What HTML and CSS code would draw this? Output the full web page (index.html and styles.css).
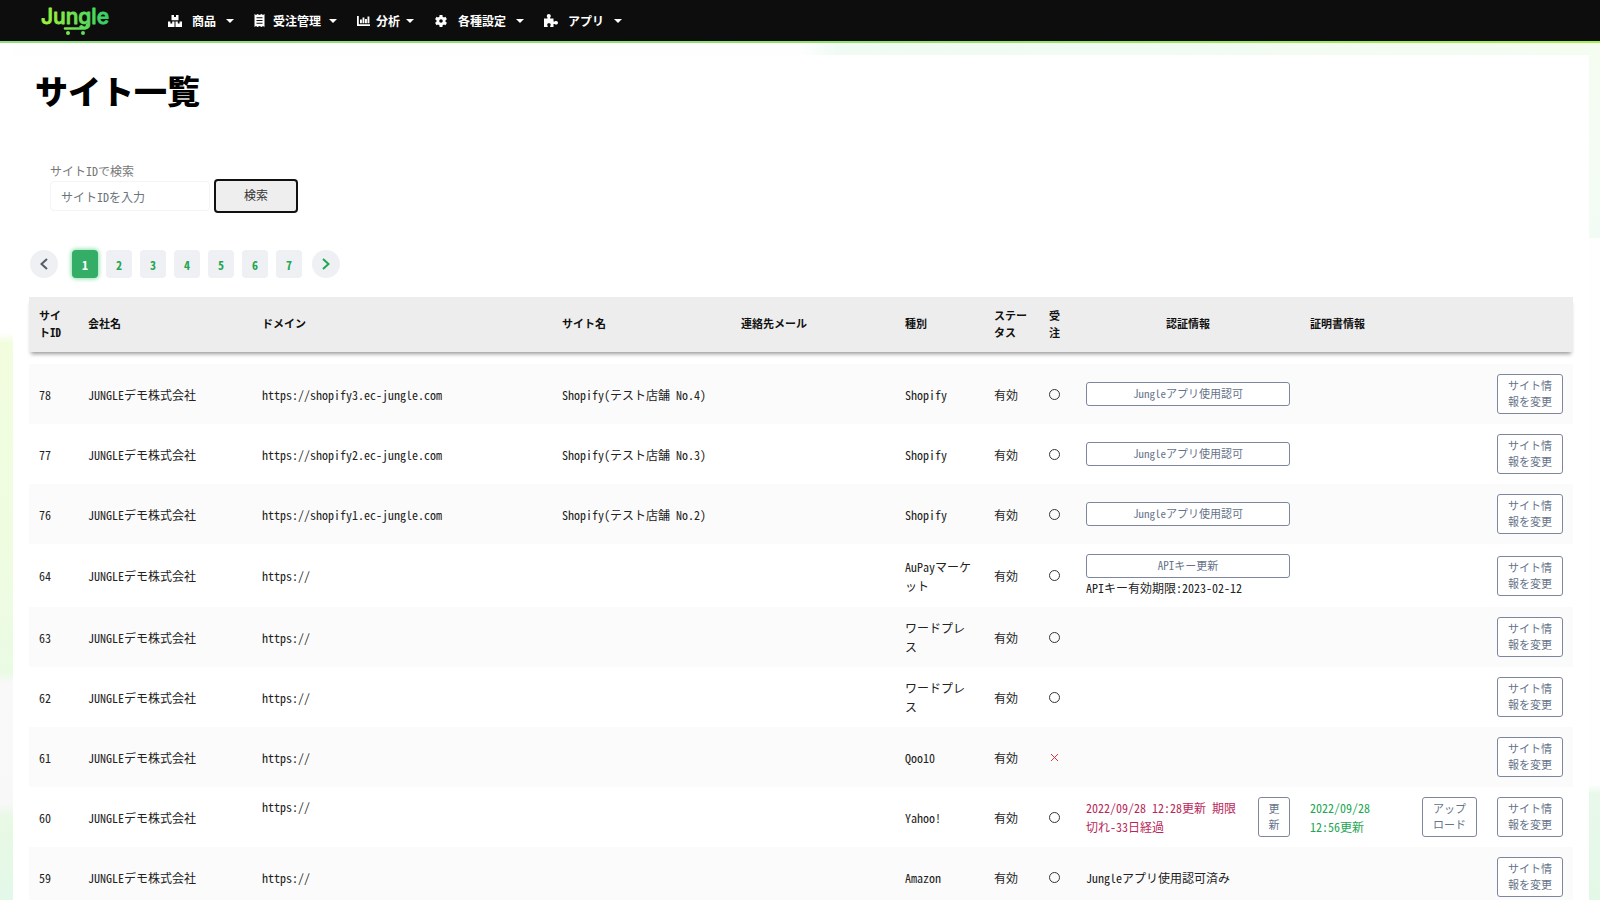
FILE: index.html
```
<!DOCTYPE html>
<html lang="ja">
<head>
<meta charset="utf-8">
<title>サイト一覧 | Jungle</title>
<link rel="stylesheet" href="styles.css">
</head>
<body>
<header class="navbar">
  <a class="logo" href="#" aria-label="Jungle">
    <svg width="72" height="38" viewBox="0 0 72 38">
      <defs>
        <linearGradient id="brand" gradientUnits="userSpaceOnUse" x1="2" y1="0" x2="68" y2="0">
          <stop offset="0" stop-color="#a4f23a"/><stop offset="1" stop-color="#36cf6c"/>
        </linearGradient>
      </defs>
      <text class="logo-text" x="1" y="22" fill="url(#brand)" stroke="url(#brand)">Jungle</text>
      <path d="M25 26.500H44Q47 26.500 47 23" fill="none" stroke="url(#brand)" stroke-width="2.600" stroke-linecap="round"/>
      <circle cx="28" cy="31" r="2" fill="url(#brand)"/><circle cx="43" cy="31" r="2" fill="url(#brand)"/>
    </svg>
  </a>
  <nav class="menu">
    <button class="menu-item" type="button">
      <svg class="icon" width="14" height="12" viewBox="0 0 14 12"><path d="M4 0H6V2H8V0H10.500V5.200H3.500V0ZM0 6.500H2.400V8.500H4.200V6.500H6.500V12H0ZM7.500 6.500H9.800V8.500H11.600V6.500H14V12H7.500Z" fill="currentColor"/></svg>
      <span>商品</span></button>
    <button class="menu-item menu-item-close" type="button">
      <svg class="icon" width="11" height="13" viewBox="0 0 11 13"><path fill-rule="evenodd" fill="currentColor" d="M0.500 0L2 1L3.500 0L5.500 1L7.500 0L9 1L10.500 0V13L9 12L7.500 13L5.500 12L3.500 13L2 12L.5 13ZM2.500 3.200V4.200H8.500V3.200ZM2.500 6V7H8.500V6ZM2.500 8.800V9.800H8.500V8.800Z"/></svg>
      <span>受注管理</span></button>
    <button class="menu-item menu-item-tight" type="button">
      <svg class="icon" width="13" height="12" viewBox="0 0 13 12"><path fill="currentColor" d="M0 1H1.800V9.200H13V11H0ZM3 4.500H4.900V8.300H3ZM5.500 2.500H7.400V8.300H5.500ZM8 4H9.900V8.300H8ZM10.500 1.500H12.400V8.300H10.500Z"/></svg>
      <span>分析</span></button>
    <button class="menu-item" type="button">
      <svg class="icon" width="14" height="12" viewBox="-1 0 14 12"><circle cx="6" cy="6" r="3.200" fill="none" stroke="currentColor" stroke-width="2.800"/><path d="M6 0V2.500M6 9.500V12M.8 3L3 4.300M9 7.700L11.200 9M.8 9L3 7.700M9 4.300L11.200 3" stroke="currentColor" stroke-width="3"/></svg>
      <span>各種設定</span></button>
    <button class="menu-item" type="button">
      <svg class="icon" width="14" height="13" viewBox="0 0 14 13"><path fill="currentColor" d="M0 4.500H3.500C3.800 3.500 2.800 3 2.800 2C2.800 .8 3.700 0 4.800 0S6.800 .8 6.800 2C6.800 3 5.800 3.500 6.100 4.500H9.500V7.600C10.500 8 11 7 12.200 7C13.300 7 14 7.900 14 8.800S13.300 10.600 12.200 10.600C11 10.600 10.500 9.600 9.500 10V13H6.200C5.900 12 6.700 11.600 6.700 10.700C6.700 9.800 5.900 9.300 5 9.300S3.200 9.800 3.200 10.700C3.200 11.600 4 12 3.700 13H0Z"/></svg>
      <span>アプリ</span></button>
  </nav>
</header>

<main class="page">
  <section class="panel">
    <h1 class="title">サイト一覧</h1>

    <form class="search">
      <label class="search-label" for="site-id">サイトIDで検索</label>
      <div class="search-row">
        <input class="search-input" id="site-id" type="text" placeholder="サイトIDを入力">
        <button class="search-button" type="button">検索</button>
      </div>
    </form>

    <nav class="pager" aria-label="ページ">
      <a class="pager-arrow pager-prev" href="#" aria-label="前へ"><svg width="8" height="12" viewBox="0 0 8 12"><path d="M7 1L1.500 6L7 11" fill="none" stroke="currentColor" stroke-width="2"/></svg></a>
      <a class="pager-link pager-active" href="#">1</a>
      <a class="pager-link" href="#">2</a>
      <a class="pager-link" href="#">3</a>
      <a class="pager-link" href="#">4</a>
      <a class="pager-link" href="#">5</a>
      <a class="pager-link" href="#">6</a>
      <a class="pager-link" href="#">7</a>
      <a class="pager-arrow pager-next" href="#" aria-label="次へ"><svg width="8" height="12" viewBox="0 0 8 12"><path d="M1 1L6.500 6L1 11" fill="none" stroke="currentColor" stroke-width="2"/></svg></a>
    </nav>

    <table class="sites">
      <colgroup>
        <col class="c-id"><col class="c-company"><col class="c-domain"><col class="c-name"><col class="c-mail"><col class="c-type"><col class="c-status"><col class="c-order"><col class="c-auth"><col class="c-cert"><col class="c-edit">
      </colgroup>
      <thead>
        <tr><th>サイトID</th><th>会社名</th><th>ドメイン</th><th>サイト名</th><th>連絡先メール</th><th>種別</th><th>ステータス</th><th>受注</th><th class="center">認証情報</th><th>証明書情報</th><th></th></tr>
      </thead>
      <tbody>
        <tr><td>78</td><td>JUNGLEデモ株式会社</td><td>https://shopify3.ec-jungle.com</td><td>Shopify(テスト店舗 No.4)</td><td></td><td>Shopify</td><td>有効</td><td><span class="mark"></span></td><td><button class="btn btn-wide" type="button">Jungleアプリ使用認可</button></td><td></td><td><button class="btn btn-edit" type="button">サイト情報を変更</button></td></tr>
        <tr><td>77</td><td>JUNGLEデモ株式会社</td><td>https://shopify2.ec-jungle.com</td><td>Shopify(テスト店舗 No.3)</td><td></td><td>Shopify</td><td>有効</td><td><span class="mark"></span></td><td><button class="btn btn-wide" type="button">Jungleアプリ使用認可</button></td><td></td><td><button class="btn btn-edit" type="button">サイト情報を変更</button></td></tr>
        <tr><td>76</td><td>JUNGLEデモ株式会社</td><td>https://shopify1.ec-jungle.com</td><td>Shopify(テスト店舗 No.2)</td><td></td><td>Shopify</td><td>有効</td><td><span class="mark"></span></td><td><button class="btn btn-wide" type="button">Jungleアプリ使用認可</button></td><td></td><td><button class="btn btn-edit" type="button">サイト情報を変更</button></td></tr>
        <tr><td>64</td><td>JUNGLEデモ株式会社</td><td>https://</td><td></td><td></td><td>AuPayマーケット</td><td>有効</td><td><span class="mark"></span></td><td><button class="btn btn-wide" type="button">APIキー更新</button><div>APIキー有効期限:2023-02-12</div></td><td></td><td><button class="btn btn-edit" type="button">サイト情報を変更</button></td></tr>
        <tr><td>63</td><td>JUNGLEデモ株式会社</td><td>https://</td><td></td><td></td><td>ワードプレス</td><td>有効</td><td><span class="mark"></span></td><td></td><td></td><td><button class="btn btn-edit" type="button">サイト情報を変更</button></td></tr>
        <tr><td>62</td><td>JUNGLEデモ株式会社</td><td>https://</td><td></td><td></td><td>ワードプレス</td><td>有効</td><td><span class="mark"></span></td><td></td><td></td><td><button class="btn btn-edit" type="button">サイト情報を変更</button></td></tr>
        <tr><td>61</td><td>JUNGLEデモ株式会社</td><td>https://</td><td></td><td></td><td>Qoo10</td><td>有効</td><td><svg class="cross" width="11" height="11" viewBox="0 0 11 11" role="img" aria-label="×"><path d="M2 2L9 9M9 2L2 9" stroke="#e8323c"/></svg></td><td></td><td></td><td><button class="btn btn-edit" type="button">サイト情報を変更</button></td></tr>
        <tr><td>60</td><td>JUNGLEデモ株式会社</td><td class="top">https://</td><td></td><td></td><td>Yahoo!</td><td>有効</td><td><span class="mark"></span></td><td><div class="pair"><span class="expired">2022/09/28 12:28更新 期限切れ-33日経過</span><button class="btn btn-renew" type="button">更新</button></div></td><td><div class="pair"><span class="renewed">2022/09/28 12:56更新</span><button class="btn btn-upload" type="button">アップロード</button></div></td><td><button class="btn btn-edit" type="button">サイト情報を変更</button></td></tr>
        <tr><td>59</td><td>JUNGLEデモ株式会社</td><td>https://</td><td></td><td></td><td>Amazon</td><td>有効</td><td><span class="mark"></span></td><td>Jungleアプリ使用認可済み</td><td></td><td><button class="btn btn-edit" type="button">サイト情報を変更</button></td></tr>
      </tbody>
    </table>
  </section>
</main>
</body>
</html>
```
FILE: styles.css
```
* { box-sizing: border-box; }

body {
  margin: 0;
  height: 100vh;
  display: flex;
  flex-direction: column;
  font-family: "Noto Sans Mono CJK JP", "Noto Sans CJK JP", sans-serif;
  font-size: 12px;
  line-height: 19px;
  color: #222;
  background: #fff;
}

button, input { font-family: inherit; }

/* Navigation bar */
.navbar {
  flex: none;
  display: flex;
  align-items: center;
  height: 43px;
  padding-left: 40px;
  background: #0d0d0d;
  border-bottom: 2px solid;
  border-image: linear-gradient(90deg, #8fdd80, #8fe070 50%, #a6f04c) 1;
}
.logo { display: flex; margin-right: 56px; }
.logo-text {
  font-family: Inter, sans-serif;
  font-size: 21px;
  font-weight: 500;
  stroke-width: 0.8;
  stroke-linejoin: round;
}
.menu { display: flex; gap: 20px; }
.menu-item {
  display: flex;
  align-items: center;
  gap: 10px;
  padding: 0;
  border: 0;
  background: none;
  color: #fff;
  font-size: 12px;
  font-weight: 700;
  line-height: 20px;
}
.menu-item-close { gap: 8px; }
.menu-item-tight { gap: 6px; }
.menu-item::after {
  content: "";
  border: 4px solid transparent;
  border-top-color: #fff;
  border-bottom: 0;
}

/* Page background and panel */
.page {
  flex: 1;
  min-height: 0;
  overflow: auto;
  scrollbar-width: none;
  padding: 12px 11px 0 13px;
  background:
    linear-gradient(90deg, transparent, #f0fbf4 40px, #f5fcf2) right top / 50% 12px no-repeat,
    linear-gradient(#f5fcf2, #f3fcf4) right top / 11px 195px no-repeat,
    linear-gradient(#fff, #e8f8ea 10px, #e4f8e8) right bottom / 11px 116px no-repeat,
    linear-gradient(#fff 290px, #f1fddd 300px, #effce0 500px, #eafbe4 630px, #f8f9f8 640px, #f8f8f8 760px, #e8f9e4 775px, #e3f8e9) left top / 13px 100% no-repeat,
    #fefefe;
}
.panel {
  padding: 14px 16px 0;
  background: #fff;
}
.title {
  margin: 0 6px;
  font-family: "Noto Sans CJK JP", sans-serif;
  font-size: 33px;
  font-weight: 900;
  line-height: 42px;
  color: #000;
}

/* Search */
.search { margin: 51px 21px 0; }
.search-label { display: block; line-height: 17px; color: #777; }
.search-row { display: flex; align-items: center; gap: 4px; }
.search-input {
  width: 160px;
  height: 30px;
  padding: 0 10px;
  border: 1px solid #f4f4f6;
  border-radius: 4px;
  background: #fff;
  font-size: 12px;
}
.search-input::placeholder { color: #6c757d; }
.search-button {
  width: 84px;
  height: 34px;
  padding: 0 0 3px;
  border: 2px solid #111;
  border-radius: 4px;
  background: #eee;
  color: #333;
  font-size: 12px;
}

/* Pagination */
.pager { display: flex; align-items: center; gap: 8px; margin: 37px 1px 19px; }
.pager-link, .pager-arrow {
  display: flex;
  align-items: center;
  justify-content: center;
  height: 28px;
  background: #eff0f4;
  color: #22a652;
  font-weight: 700;
  text-decoration: none;
}
.pager-link { width: 26px; border-radius: 4px; }
.pager-active {
  background: #34ad66;
  color: #fff;
  box-shadow: 0 0 4px 1px #8fe0ae;
}
.pager-arrow { width: 28px; border-radius: 50%; }
.pager-prev { margin-right: 6px; color: #555c66; }
.pager-next { margin-left: 2px; }

/* Site table */
.sites {
  width: 100%;
  table-layout: fixed;
  border-spacing: 0;
  line-break: loose;
}
.c-id { width: 49px; }
.c-company { width: 174px; }
.c-domain { width: 300px; }
.c-name { width: 179px; }
.c-mail { width: 164px; }
.c-type { width: 89px; }
.c-status { width: 55px; }
.c-order { width: 37px; }
.c-auth { width: 224px; }
.c-cert { width: 187px; }
.c-edit { width: 86px; }

.sites thead tr {
  background: #ededed;
  box-shadow: 0 4px 4px -2px #0006;
}
.sites th {
  height: 55px;
  padding: 0 10px 2px;
  font-size: 11px;
  line-height: 17px;
  font-weight: 700;
  text-align: left;
  color: #111;
}
.sites th.center { text-align: center; }
.sites tbody::before { content: ""; display: table-row; height: 12px; }
.sites td { padding: 10px; vertical-align: middle; }
.sites td.top { vertical-align: top; }
.sites tbody tr:nth-child(odd) { background: #fbfbfb; }

.mark {
  display: block;
  width: 11px;
  height: 11px;
  border: 1px solid #333;
  border-radius: 50%;
}
.cross { display: block; }
.pair { display: flex; align-items: center; justify-content: space-between; }
.expired { width: 158px; color: #b8285a; }
.renewed { width: 72px; color: #22a652; }

.btn {
  display: block;
  padding: 2px 9px 4px;
  border: 1px solid #7c879b;
  border-radius: 3px;
  background: #fff;
  color: #66738a;
  font-size: 11px;
  line-height: 16px;
  text-align: center;
}
.btn-wide { width: 100%; }
.btn-edit { width: 66px; }
.btn-renew { width: 32px; }
.btn-upload { width: 55px; }
```
